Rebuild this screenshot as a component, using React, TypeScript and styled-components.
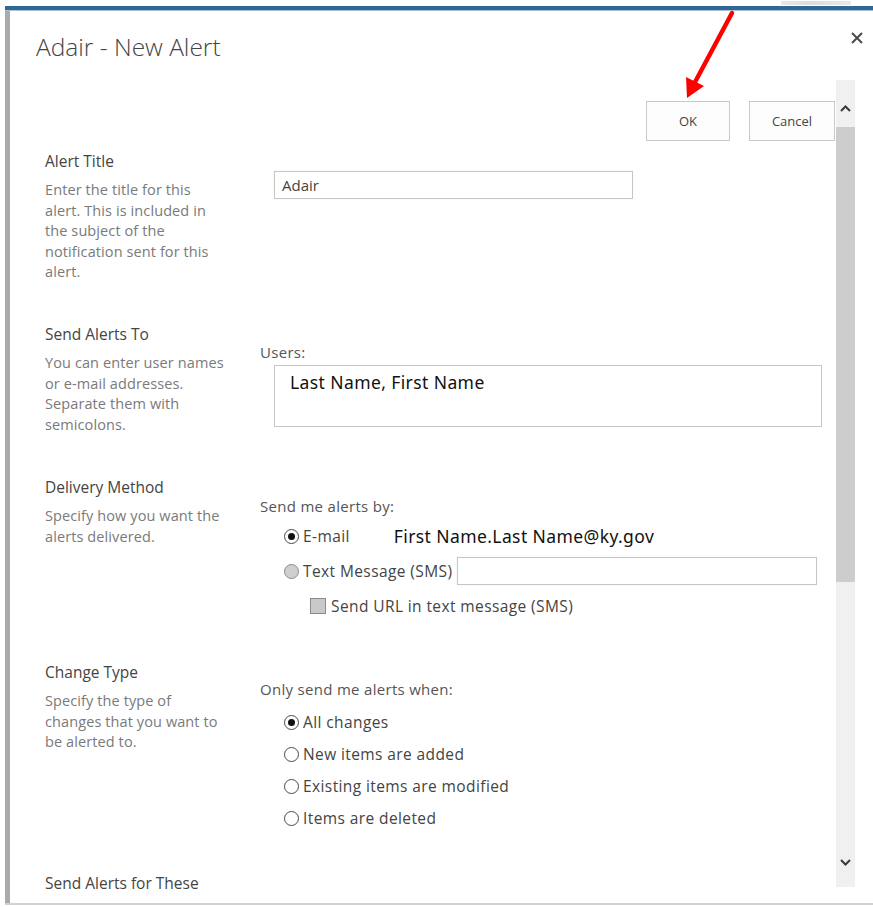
import React from "react";
import styled, { createGlobalStyle } from "styled-components";

const GlobalStyle = createGlobalStyle`
  html, body {
    margin: 0;
    padding: 0;
    background: #ffffff;
  }
  body {
    font-family: "Open Sans", "Noto Sans", sans-serif;
    -webkit-font-smoothing: antialiased;
  }
`;

const Screen = styled.div`
  position: relative;
  width: 873px;
  height: 907px;
  overflow: hidden;
  background: #ffffff;
  display: flex;
  flex-direction: column;
`;

const TopStrip = styled.div`
  height: 6px;
  display: flex;
  justify-content: flex-end;
  padding-right: 22px;
`;

/* faint trace of the page tab peeking above the dialog */
const GhostTab = styled.div`
  width: 70px;
  height: 4px;
  margin-top: 1px;
  background: linear-gradient(90deg, #e6e9ed, #d9dde2 40%, #e6e9ed);
  filter: blur(0.6px);
`;

const BlueBar = styled.div`
  height: 4px;
  margin-left: 5px;
  background: #2f6893;
  border-bottom: 1px solid #a9c2d6;
`;

const Body = styled.div`
  flex: 1;
  min-height: 0;
  display: flex;
  margin-left: 5px;
`;

const Edge = styled.div`
  width: 5px;
  background: #aaaaaa;
`;

const Dialog = styled.div`
  flex: 1;
  min-width: 0;
  display: flex;
  flex-direction: column;
`;

const Header = styled.header`
  height: 69px;
  display: flex;
  justify-content: space-between;
  align-items: flex-start;
  padding: 0 10px 0 26px;
`;

const Title = styled.h1`
  margin: 20px 0 0;
  font-size: 24.5px;
  line-height: 32px;
  font-weight: 300;
  color: #444444;
`;

const CloseButton = styled.button`
  margin-top: 21px;
  width: 12px;
  height: 12px;
  padding: 0;
  border: 0;
  background: none;
  display: flex;
`;

const Main = styled.div`
  flex: 1;
  min-height: 0;
  display: flex;
  overflow: hidden;
`;

const Form = styled.div`
  flex: 1;
  min-width: 0;
  padding-left: 35px;
`;

const ButtonRow = styled.div`
  display: flex;
  justify-content: flex-end;
  gap: 19px;
  padding: 21px 1px 0 0;
`;

const Button = styled.button<{ $w: number }>`
  width: ${(p) => p.$w}px;
  height: 40px;
  border: 1px solid #c8c8c8;
  background: #fdfdfd;
  font-family: "Open Sans", sans-serif;
  font-size: 13px;
  color: #444444;
  padding: 0;
`;

const Section = styled.section<{ $h: number; $top?: number }>`
  display: grid;
  grid-template-columns: 215px 1fr;
  height: ${(p) => p.$h}px;
  margin-top: ${(p) => p.$top ?? 0}px;
`;

const Aside = styled.div`
  display: flex;
  flex-direction: column;
`;

const Label = styled.div`
  font-size: 15.5px;
  line-height: 20px;
  color: #444444;
`;

const Desc = styled.div`
  margin-top: 9px;
  font-size: 14.5px;
  line-height: 20.5px;
  letter-spacing: 0.1px;
  color: #7a7a7a;
`;

const DescLine = styled.span`
  display: block;
  white-space: nowrap;
`;

const Fields = styled.div`
  display: flex;
  flex-direction: column;
  align-items: flex-start;
`;

const FieldLabel = styled.div<{ $top: number }>`
  margin-top: ${(p) => p.$top}px;
  font-size: 15px;
  line-height: 20px;
  letter-spacing: 0.3px;
  color: #555555;
`;

const TextInput = styled.div<{ $top: number; $w: number; $ml: number }>`
  box-sizing: border-box;
  margin-top: ${(p) => p.$top}px;
  margin-left: ${(p) => p.$ml}px;
  width: ${(p) => p.$w}px;
  height: 28px;
  border: 1px solid #c6c6c6;
  box-shadow: 0 0 2px rgba(0, 0, 0, 0.06);
  padding-left: 7px;
  font-size: 15px;
  line-height: 26px;
  color: #444444;
`;

const PeopleBox = styled.div`
  box-sizing: border-box;
  margin-top: 3px;
  margin-left: 14px;
  width: 548px;
  height: 62px;
  border: 1px solid #c6c6c6;
  padding: 5px 15px;
  font-family: "Noto Sans", sans-serif;
  font-size: 17.5px;
  line-height: 22px;
  letter-spacing: 0.4px;
  color: #111111;
`;

const Option = styled.div<{ $top: number; $h: number; $indent: number }>`
  margin-top: ${(p) => p.$top}px;
  height: ${(p) => p.$h}px;
  padding-left: ${(p) => p.$indent}px;
  display: flex;
  align-items: center;
  font-size: 15.5px;
  letter-spacing: 0.4px;
  color: #444444;
`;

const Radio = styled.span<{ $checked?: boolean; $muted?: boolean }>`
  box-sizing: border-box;
  width: 15px;
  height: 15px;
  border-radius: 50%;
  border: 1.5px solid ${(p) => (p.$muted ? "#8c8c8c" : "#4a4a4a")};
  background: ${(p) => (p.$muted ? "#cfcfcf" : "#ffffff")};
  margin-right: 4px;
  display: flex;
  align-items: center;
  justify-content: center;
  flex: none;

  &::after {
    content: "";
    display: ${(p) => (p.$checked ? "block" : "none")};
    width: 7px;
    height: 7px;
    border-radius: 50%;
    background: #111111;
  }
`;

const Checkbox = styled.span`
  box-sizing: border-box;
  width: 16px;
  height: 16px;
  border: 1px solid #8a8a8a;
  background: #c9c9c9;
  margin-right: 5px;
  flex: none;
`;

const Address = styled.span`
  margin-left: 44px;
  font-family: "Noto Sans", sans-serif;
  font-size: 17.5px;
  letter-spacing: 0.4px;
  color: #111111;
`;

const Scroll = styled.div`
  width: 19px;
  margin: 0 18px 16px 0;
  background: #f0f0f0;
  display: flex;
  flex-direction: column;
`;

const ScrollButton = styled.div<{ $h: number; $pad?: number }>`
  height: ${(p) => p.$h}px;
  padding-top: ${(p) => p.$pad ?? 0}px;
  box-sizing: border-box;
  display: flex;
  align-items: center;
  justify-content: center;
  flex: none;
`;

const Thumb = styled.div`
  height: 455px;
  background: #cdcdcd;
  flex: none;
`;

const Track = styled.div`
  flex: 1;
`;

const BottomRule = styled.div`
  height: 2px;
  margin: 0 0 2px 5px;
  background: #d2d2d2;
`;

const Pointer = styled.svg`
  position: absolute;
  left: 0;
  top: 0;
  pointer-events: none;
`;

const Chevron = ({ up }: { up?: boolean }) => (
  <svg width="11" height="7" viewBox="0 0 11 7">
    <path
      d={up ? "M1 6 L5.5 1.5 L10 6" : "M1 1 L5.5 5.5 L10 1"}
      fill="none"
      stroke="#3a3a3a"
      strokeWidth="2"
    />
  </svg>
);

const Description = ({ lines }: { lines: string[] }) => (
  <Desc>
    {lines.map((l) => (
      <DescLine key={l}>{l}</DescLine>
    ))}
  </Desc>
);

const changeOptions = [
  { label: "All changes", checked: true },
  { label: "New items are added" },
  { label: "Existing items are modified" },
  { label: "Items are deleted" },
];

export default function App() {
  return (
    <>
      <GlobalStyle />
      <Screen>
        <TopStrip>
          <GhostTab />
        </TopStrip>
        <BlueBar />
        <Body>
          <Edge />
          <Dialog>
            <Header>
              <Title>Adair - New Alert</Title>
              <CloseButton aria-label="Close">
                <svg width="12" height="12" viewBox="0 0 12 12">
                  <path d="M1 1 L11 11 M11 1 L1 11" stroke="#4a4a4a" strokeWidth="2" />
                </svg>
              </CloseButton>
            </Header>
            <Main>
              <Form>
                <ButtonRow>
                  <Button $w={84}>OK</Button>
                  <Button $w={86}>Cancel</Button>
                </ButtonRow>

                <Section $h={173} $top={10}>
                  <Aside>
                    <Label>Alert Title</Label>
                    <Description
                      lines={[
                        "Enter the title for this",
                        "alert. This is included in",
                        "the subject of the",
                        "notification sent for this",
                        "alert.",
                      ]}
                    />
                  </Aside>
                  <Fields>
                    <TextInput $top={20} $w={359} $ml={14}>
                      Adair
                    </TextInput>
                  </Fields>
                </Section>

                <Section $h={153}>
                  <Aside>
                    <Label>Send Alerts To</Label>
                    <Description
                      lines={[
                        "You can enter user names",
                        "or e-mail addresses.",
                        "Separate them with",
                        "semicolons.",
                      ]}
                    />
                  </Aside>
                  <Fields>
                    <FieldLabel $top={18}>Users:</FieldLabel>
                    <PeopleBox>Last Name, First Name</PeopleBox>
                  </Fields>
                </Section>

                <Section $h={185}>
                  <Aside>
                    <Label>Delivery Method</Label>
                    <Description lines={["Specify how you want the", "alerts delivered."]} />
                  </Aside>
                  <Fields>
                    <FieldLabel $top={19}>Send me alerts by:</FieldLabel>
                    <Option $top={6} $h={28} $indent={24}>
                      <Radio $checked />
                      E-mail
                      <Address>First Name.Last Name@ky.gov</Address>
                    </Option>
                    <Option $top={7} $h={28} $indent={24}>
                      <Radio $muted />
                      Text Message (SMS)
                      <TextInput $top={0} $w={360} $ml={5} />
                    </Option>
                    <Option $top={7} $h={28} $indent={50}>
                      <Checkbox />
                      Send URL in text message (SMS)
                    </Option>
                  </Fields>
                </Section>

                <Section $h={211}>
                  <Aside>
                    <Label>Change Type</Label>
                    <Description
                      lines={["Specify the type of", "changes that you want to", "be alerted to."]}
                    />
                  </Aside>
                  <Fields>
                    <FieldLabel $top={17}>Only send me alerts when:</FieldLabel>
                    {changeOptions.map((o, i) => (
                      <Option key={o.label} $top={i === 0 ? 7 : 0} $h={32} $indent={24}>
                        <Radio $checked={o.checked} />
                        {o.label}
                      </Option>
                    ))}
                  </Fields>
                </Section>

                <Section $h={60}>
                  <Aside>
                    <Label>Send Alerts for These</Label>
                  </Aside>
                  <Fields />
                </Section>
              </Form>
              <Scroll>
                <ScrollButton $h={47} $pad={9}>
                  <Chevron up />
                </ScrollButton>
                <Thumb />
                <Track />
                <ScrollButton $h={50}>
                  <Chevron />
                </ScrollButton>
              </Scroll>
            </Main>
          </Dialog>
        </Body>
        <BottomRule />
        <Pointer width="873" height="120" viewBox="0 0 873 120">
          <path d="M732 13 L694 84" stroke="#ff0000" strokeWidth="4.5" strokeLinecap="round" />
          <path d="M687 98 L686 77 L704 86 Z" fill="#ff0000" />
        </Pointer>
      </Screen>
    </>
  );
}
